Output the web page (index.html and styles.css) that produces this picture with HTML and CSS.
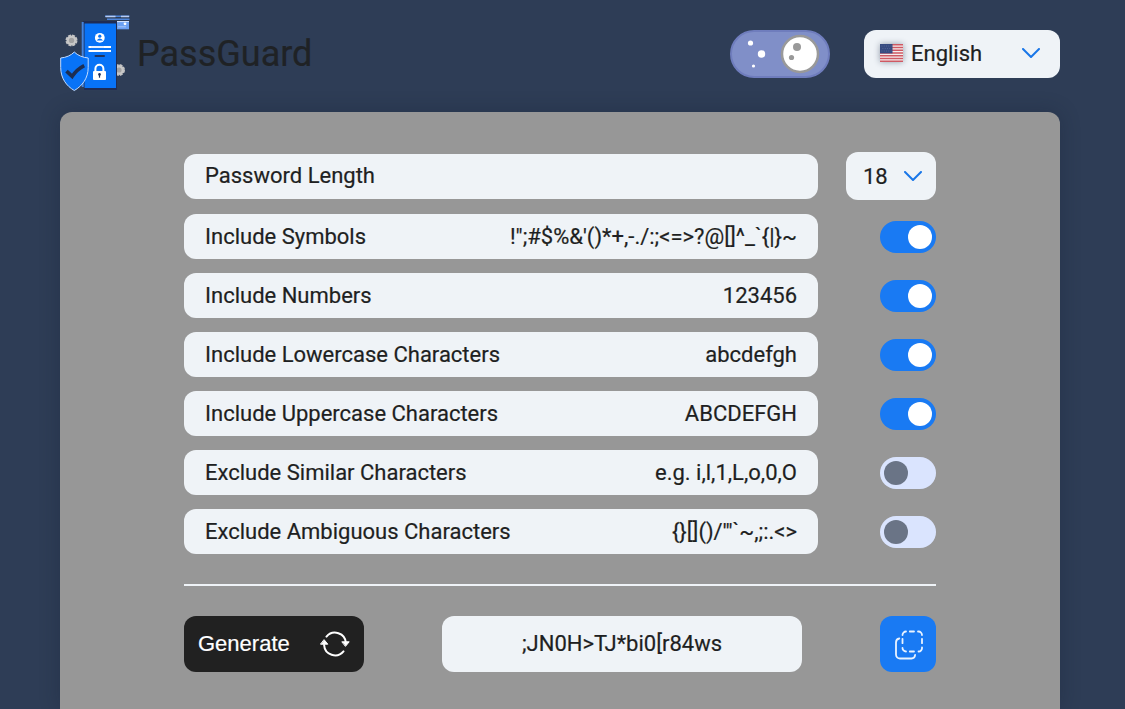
FILE: index.html
```html
<!DOCTYPE html>
<html lang="en">
<head>
<meta charset="utf-8">
<title>PassGuard</title>
<link rel="stylesheet" href="styles.css">
</head>
<body>
<div class="page">
  <header class="header">
    <div class="brand">
      <svg class="logo" viewBox="60 14 70 78" aria-hidden="true">
        <path d="M105 16.300h24.500M107 19.200h22.500" stroke="#4d86dc" stroke-width="1.600"/>
        <path d="M105.500 16.500h10M121 16.500h8" stroke="#b8cdf5" stroke-width="1.300"/>
        <rect x="116" y="21" width="13" height="8.300" fill="#6ba0f2"/>
        <path d="M117 21.600h12" stroke="#dce8ff" stroke-width="1"/>
        <circle cx="125" cy="23.800" r="1.400" fill="#fff"/>
        <path d="M118 26.800h8" stroke="#a9c6f8" stroke-width="1"/>
        <circle cx="71.500" cy="40.400" r="5" fill="#c9c9c9" stroke="#c4c4c4" stroke-width="2" stroke-dasharray="2.900 1.020"/>
        <circle cx="71.500" cy="40.400" r="2.700" fill="#a2a2a2"/>
        <circle cx="119" cy="70" r="5" fill="#c9c9c9" stroke="#c4c4c4" stroke-width="2" stroke-dasharray="2.900 1.020"/>
        <circle cx="119" cy="70" r="2.600" fill="#a2a2a2"/>
        <path d="M83 21h34v69H84z" fill="#1f2c54"/>
        <path d="M82.700 22v65" stroke="#4484de" stroke-width="2"/>
        <rect x="84.500" y="23.500" width="31.500" height="64.500" fill="#0873f7"/>
        <circle cx="99.800" cy="37.800" r="4.900" fill="#fff"/>
        <circle cx="99.800" cy="36.200" r="1.600" fill="#0873f7"/>
        <path d="M96.600 40.400q3.200-3.600 6.400 0z" fill="#0873f7"/>
        <path d="M88.500 47H111M88.500 51H111" stroke="#fff" stroke-width="2.200"/>
        <path d="M91 47h13" stroke="#bfd9ff" stroke-width=".8"/>
        <path d="M95.500 56h8.500" stroke="#20335e" stroke-width="2" stroke-linecap="round"/>
        <path d="M95.400 72v-3.200a4 4 0 0 1 8 0V72" fill="none" stroke="#fff" stroke-width="2"/>
        <rect x="93" y="71" width="13" height="9" rx="1" fill="#fff"/>
        <circle cx="99.500" cy="74.400" r="1.300" fill="#20335e"/>
        <path d="M99.500 74.500v3.200" stroke="#20335e" stroke-width="1.200"/>
        <path d="M74.300 52C71 55.500 66 57.500 60.700 58v9.500c0 10.500 5.600 18.500 13.600 23 8-4.500 13.900-12.500 13.900-23V58C83 57.500 77.700 55.500 74.300 52z" fill="#0873f7" stroke="#c4dcff" stroke-width="1"/>
        <path d="M66.500 71.200l5.700 5.200q4.500-7 12-10.800" fill="none" stroke="#1d2e52" stroke-width="3.600"/>
      </svg>
      <h1 class="title">PassGuard</h1>
    </div>
    <button class="theme" aria-label="Toggle theme">
      <svg viewBox="0 0 100 48" width="100" height="48">
        <rect x="1" y="1" width="98" height="46" rx="23" fill="#808fc8" stroke="#6f7dbd" stroke-width="2"/>
        <circle cx="20.500" cy="13" r="2.600" fill="#fff"/>
        <circle cx="31.500" cy="24" r="3.700" fill="#fff"/>
        <circle cx="23.500" cy="36" r="1.600" fill="#fff"/>
        <circle cx="70" cy="24" r="18" fill="#fff" stroke="#999" stroke-width="2.500"/>
        <circle cx="67" cy="17" r="4" fill="#999"/>
        <circle cx="61.500" cy="27.500" r="2.600" fill="#999"/>
      </svg>
    </button>
    <button class="language">
      <svg class="flag" viewBox="0 0 23 18" width="23" height="18">
        <rect width="23" height="18" fill="#f4eeee"/>
        <path d="M0 .7h23M0 3.460h23M0 6.220h23M0 8.980h23M0 11.740h23M0 14.500h23M0 17.260h23" stroke="#cf5963" stroke-width="1.380"/>
        <rect width="12.500" height="9.400" fill="#374b80"/>
        <path d="M1.500 2h10M2.500 4.500h9M1.500 7h10" stroke="#65749f" stroke-width=".8" stroke-dasharray=".8 1.500"/>
      </svg>
      <span>English</span>
      <svg class="chevron" viewBox="0 0 18 10" width="18" height="10"><path d="M1 1l8 8 8-8"/></svg>
    </button>
  </header>
  <main class="panel">
    <div class="row row-length">
      <div class="field">Password Length</div>
      <button class="length"><span>18</span><svg class="chevron" viewBox="0 0 18 10" width="18" height="10"><path d="M1 1l8 8 8-8"/></svg></button>
    </div>
    <div class="row"><div class="field"><span>Include Symbols</span><span>!";#$%&amp;'()*+,-./:;&lt;=&gt;?@[]^_`{|}~</span></div><button class="switch on" aria-label="Include Symbols"></button></div>
    <div class="row"><div class="field"><span>Include Numbers</span><span>123456</span></div><button class="switch on" aria-label="Include Numbers"></button></div>
    <div class="row"><div class="field"><span>Include Lowercase Characters</span><span>abcdefgh</span></div><button class="switch on" aria-label="Include Lowercase Characters"></button></div>
    <div class="row"><div class="field"><span>Include Uppercase Characters</span><span>ABCDEFGH</span></div><button class="switch on" aria-label="Include Uppercase Characters"></button></div>
    <div class="row"><div class="field"><span>Exclude Similar Characters</span><span>e.g. i,l,1,L,o,0,O</span></div><button class="switch" aria-label="Exclude Similar Characters"></button></div>
    <div class="row"><div class="field"><span>Exclude Ambiguous Characters</span><span>{}[]()/'"`~,;:.&lt;&gt;</span></div><button class="switch" aria-label="Exclude Ambiguous Characters"></button></div>
    <hr class="divider">
    <div class="actions">
      <button class="generate"><span>Generate</span>
        <svg viewBox="0 0 30 26" width="30" height="26" fill="none" stroke="#fff" stroke-width="2" stroke-linecap="round">
          <path d="M6.500 5.600A11 11 0 0 1 25.900 12M23.500 20.400A11 11 0 0 1 4.100 14"/>
          <path d="M22.200 10.800h7l-3.500 4.300zM.8 13.200h7l-3.500-4.300z" fill="#fff" stroke-width="1" stroke-linejoin="round"/>
        </svg>
      </button>
      <output class="password">;JN0H&gt;TJ*bi0[r84ws</output>
      <button class="copy" aria-label="Copy">
        <svg viewBox="0 0 28 30" width="28" height="30" fill="none" stroke="#e9f3ff" stroke-width="1.800" stroke-linecap="round">
          <path d="M7.500 5A3.500 3.500 0 0 1 11 1.500M14.800 1.500h4.200M23 1.500h.5A3.500 3.500 0 0 1 27 5M27 8.800v4.400M27 17.500A3.500 3.500 0 0 1 23.500 21.500M19 21.500h-4.200M11 21.500A3.500 3.500 0 0 1 7.500 18M7.500 13.200V8.800"/>
          <path d="M4.300 8.500Q1 9 1 12.500v12a4 4 0 0 0 4 4h11.500q3.200 0 3.600-3.500"/>
        </svg>
      </button>
    </div>
  </main>
</div>
</body>
</html>
```
FILE: styles.css
```css
* { box-sizing: border-box; }
body {
  margin: 0;
  background: #2e3d56;
  color: #1e1f22;
  font: 22px Roboto, sans-serif;
  -webkit-text-stroke: .2px;
}
button {
  padding: 0;
  border: 0;
  font: inherit;
  color: inherit;
}
.page { width: 1000px; margin-left: 60px; }
.header {
  display: flex;
  align-items: center;
  height: 112px;
  padding-bottom: 5px;
}
.brand {
  display: flex;
  flex: 1;
  align-items: center;
  gap: 7px;
}
.logo { width: 70px; height: 78px; margin-bottom: 1px; }
.title {
  margin: 0;
  font-size: 36px;
  font-weight: 400;
  color: #1f2225;
}
.theme {
  height: 48px;
  margin-right: 34px;
  background: none;
}
.theme svg { display: block; }
.language {
  display: flex;
  align-items: center;
  width: 196px;
  height: 48px;
  padding: 0 20px 1px 16px;
  border-radius: 12px;
  background: #eff3f7;
}
.flag { margin-right: 8px; filter: drop-shadow(0 0 3px #8f99a8); }
.chevron {
  margin-left: auto;
  fill: none;
  stroke: #1976e8;
  stroke-width: 2;
  stroke-linecap: round;
  stroke-linejoin: round;
}
.panel {
  height: 597px;
  padding: 40px 124px 0;
  border-radius: 12px 12px 0 0;
  background: #979797;
  box-shadow: 0 0 20px rgba(20, 30, 50, .3);
}
.row {
  display: flex;
  align-items: center;
  justify-content: space-between;
  height: 45px;
  margin-bottom: 14px;
}
.row-length { height: 48px; }
.field {
  display: flex;
  align-items: center;
  justify-content: space-between;
  width: 634px;
  height: 45px;
  padding: 0 21px 1px;
  border-radius: 12px;
  background: #eff3f7;
}
.length {
  display: flex;
  align-items: center;
  width: 90px;
  height: 48px;
  padding: 0 14px 0 17px;
  border-radius: 12px;
  background: #eff3f7;
}
.switch {
  width: 56px;
  height: 32px;
  padding: 4px;
  border-radius: 16px;
  background: #dae4fe;
}
.switch::before {
  content: "";
  display: block;
  width: 24px;
  height: 24px;
  border-radius: 50%;
  background: #6a7486;
}
.switch.on { background: #197af3; }
.switch.on::before { margin-left: auto; background: #fff; }
.divider {
  height: 2px;
  margin: 30px 0;
  border: 0;
  background: #eff3f7;
}
.actions {
  display: flex;
  justify-content: space-between;
  height: 56px;
}
.generate {
  display: flex;
  align-items: center;
  justify-content: space-between;
  width: 180px;
  padding: 0 14px;
  border-radius: 12px;
  background: #212121;
  color: #fff;
  font-family: "Liberation Sans", Arial, sans-serif;
}
.password {
  display: flex;
  align-items: center;
  justify-content: center;
  width: 360px;
  padding-bottom: 1px;
  border-radius: 12px;
  background: #eff3f7;
}
.copy {
  display: flex;
  align-items: center;
  justify-content: center;
  width: 56px;
  padding: 2px 0 0 2px;
  border-radius: 12px;
  background: #197af3;
}
```
